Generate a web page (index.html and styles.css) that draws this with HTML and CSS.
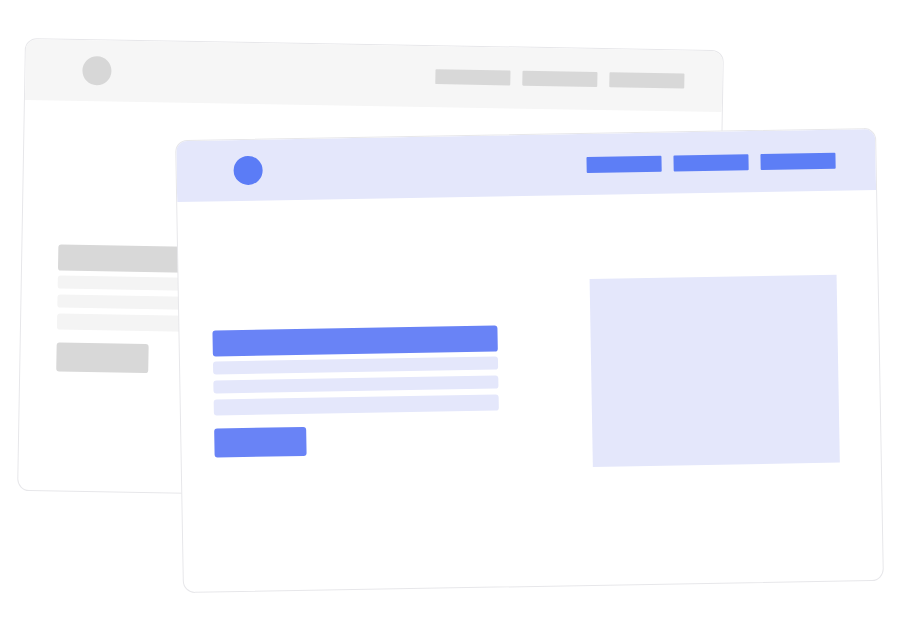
FILE: index.html
```html
<!DOCTYPE html>
<html lang="en">
<head>
<meta charset="utf-8">
<title>Wireframe windows</title>
<link rel="stylesheet" href="styles.css">
</head>
<body>
<div class="scene">
  <div class="window window--back">
    <div class="win-header">
      <span class="logo"></span>
      <nav class="nav">
        <span class="nav-item"></span>
        <span class="nav-item"></span>
        <span class="nav-item"></span>
      </nav>
    </div>
    <div class="win-body">
      <div class="col">
        <div class="bar-lg"></div>
        <div class="bar-sm"></div>
        <div class="bar-sm"></div>
        <div class="bar-sm bar-sm--tall"></div>
        <div class="btn"></div>
      </div>
    </div>
  </div>

  <div class="window window--front">
    <div class="win-header">
      <span class="logo"></span>
      <nav class="nav">
        <span class="nav-item"></span>
        <span class="nav-item"></span>
        <span class="nav-item"></span>
      </nav>
    </div>
    <div class="win-body">
      <div class="col">
        <div class="bar-lg"></div>
        <div class="bar-sm"></div>
        <div class="bar-sm"></div>
        <div class="bar-sm bar-sm--tall"></div>
        <div class="btn"></div>
      </div>
      <div class="media"></div>
    </div>
  </div>
</div>
</body>
</html>
```

FILE: styles.css
```css
html, body {
  margin: 0;
  padding: 0;
  background: #ffffff;
}

.scene {
  position: relative;
  width: 899px;
  height: 630px;
  overflow: hidden;
}

.window {
  position: absolute;
  box-sizing: border-box;
  height: 453px;
  border: 1px solid #e7e7ea;
  border-radius: 12px;
  background: #ffffff;
  overflow: hidden;
}

.window--back {
  left: 21px;
  top: 44.2px;
  width: 698.5px;
  transform: rotate(1deg);
}

.window--front {
  left: 179.3px;
  top: 134.1px;
  width: 701px;
  transform: rotate(-1deg);
}

.win-header {
  height: 61px;
  display: flex;
  align-items: center;
  justify-content: space-between;
  padding: 0 40px 0 57px;
}

.logo {
  width: 29px;
  height: 29px;
  border-radius: 50%;
}

.nav {
  display: flex;
  gap: 12px;
}

.nav-item {
  width: 75px;
  height: 16px;
  border-radius: 1px;
}

.win-body {
  display: flex;
  justify-content: space-between;
  align-items: flex-start;
}

.col {
  width: 285px;
  display: flex;
  flex-direction: column;
}

.bar-lg {
  height: 26px;
  border-radius: 3px;
}

.bar-sm {
  height: 13px;
  margin-top: 6px;
  border-radius: 3px;
}

.bar-lg + .bar-sm {
  margin-top: 5px;
}

.bar-sm--tall {
  height: 16px;
}

.btn {
  width: 92px;
  height: 29px;
  margin-top: 13px;
  border-radius: 3px;
}

.media {
  width: 247px;
  height: 188px;
}

/* back (grey) window */
.window--back .win-header { background: #f6f6f6; padding-right: 38px; }
.window--back .logo { background: #d7d7d7; }
.window--back .nav-item { background: #d8d8d8; height: 15px; }
.window--back .win-body { padding: 144px 41px 0 36px; }
.window--back .bar-lg,
.window--back .btn { background: #d8d8d8; }
.window--back .bar-sm { background: #f4f4f4; }

/* front (blue) window */
.window--front .win-header { background: #e4e7fb; }
.window--front .logo { background: #5b7cf6; }
.window--front .nav-item { background: #5d7ef6; }
.window--front .win-body { padding: 84px 41px 0 33px; }
.window--front .col { margin-top: 45px; }
.window--front .bar-lg,
.window--front .btn { background: #6983f6; }
.window--front .bar-sm { background: #e4e7fb; }
.window--front .media { background: #e4e7fb; }
```
